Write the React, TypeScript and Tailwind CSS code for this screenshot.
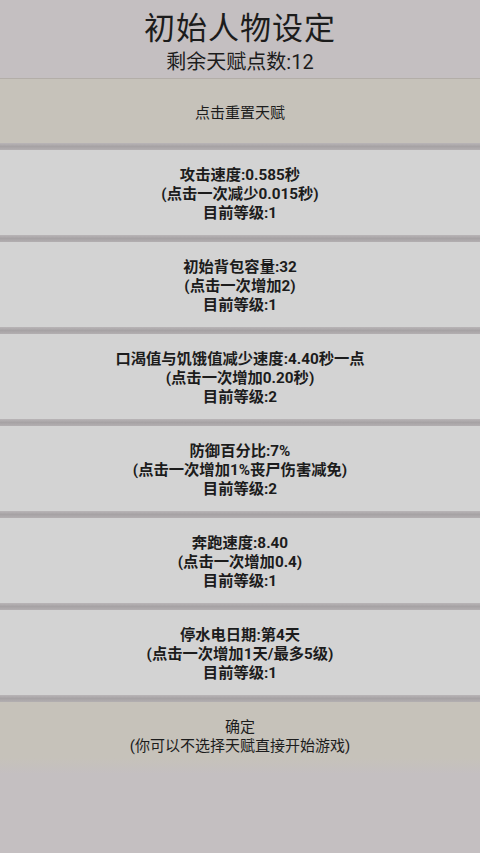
import React from "react";

const FONT = { fontFamily: '"Roboto", "Noto Sans CJK SC", sans-serif' };

const stats: string[][] = [
  ["攻击速度:0.585秒", "(点击一次减少0.015秒)", "目前等级:1"],
  ["初始背包容量:32", "(点击一次增加2)", "目前等级:1"],
  ["口渴值与饥饿值减少速度:4.40秒一点", "(点击一次增加0.20秒)", "目前等级:2"],
  ["防御百分比:7%", "(点击一次增加1%丧尸伤害减免)", "目前等级:2"],
  ["奔跑速度:8.40", "(点击一次增加0.4)", "目前等级:1"],
  ["停水电日期:第4天", "(点击一次增加1天/最多5级)", "目前等级:1"],
];

function Sep() {
  return (
    <div className="h-[7px] w-full bg-linear-to-b from-[#b9b5b7] via-[#a6a2a4] to-[#b3afb1]" />
  );
}

export default function App() {
  return (
    <div
      className="w-[480px] h-[853px] overflow-hidden flex flex-col bg-[#c4bfc1] text-[#1c1c1c]"
      style={FONT}
    >
      <div className="h-[78px] flex flex-col items-center justify-center bg-[#c4bfc1] pt-[7px]">
        <div className="text-[31px] leading-[36px] tracking-[1px]">初始人物设定</div>
        <div className="text-[20px] leading-[24px] mt-[3px]">剩余天赋点数:12</div>
      </div>
      <div className="h-[1px] bg-[#b3aea8]" />
      <div className="h-[64px] flex items-center justify-center bg-[#c6c2ba] text-[15px] pt-[5px]">
        点击重置天赋
      </div>
      <Sep />
      {stats.map((s, i) => (
        <React.Fragment key={i}>
          <div className="h-[85px] flex flex-col items-center justify-center bg-[#d3d3d3] text-[15.3px] leading-[19px] font-bold pt-[4px]">
            {s.map((l, j) => (
              <div key={j}>{l}</div>
            ))}
          </div>
          <Sep />
        </React.Fragment>
      ))}
      <div className="h-[56px] flex flex-col items-center justify-start bg-[#c6c2ba] text-[15px] leading-[19px] pt-[16px]">
        <div>确定</div>
        <div>(你可以不选择天赋直接开始游戏)</div>
      </div>
      <div className="h-[16px] bg-linear-to-b from-[#c6c2ba] to-[#c4bfc1]" />
      <div className="flex-1 bg-[#c4bfc1]" />
    </div>
  );
}
